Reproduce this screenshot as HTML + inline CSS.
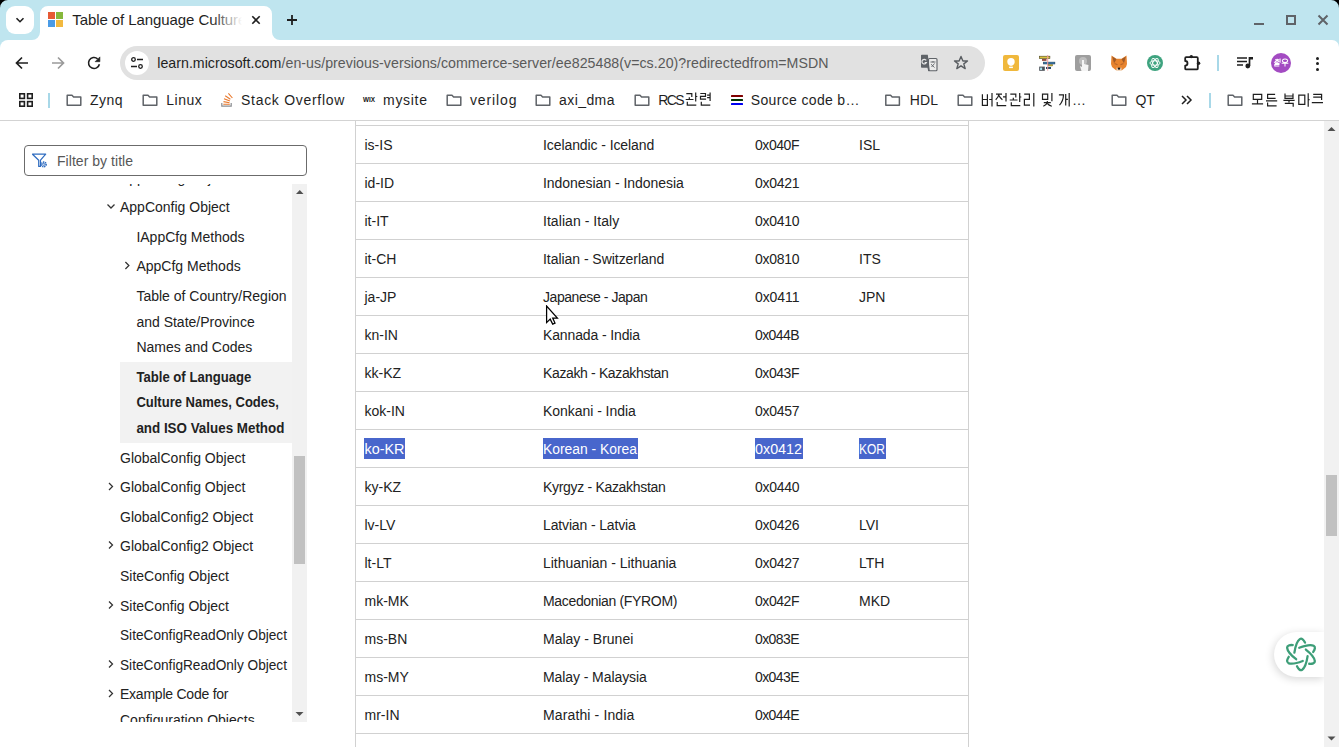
<!DOCTYPE html>
<html><head><meta charset="utf-8">
<style>
*{box-sizing:border-box;margin:0;padding:0}
html,body{width:1339px;height:747px;overflow:hidden;background:#fff;font-family:"Liberation Sans",sans-serif;color:#161616}
.a{position:absolute;white-space:nowrap}
#strip{position:absolute;left:0;top:0;width:1339px;height:50px;background:#bfe5ef}
#toolbar{position:absolute;left:0;top:40px;width:1339px;height:80px;background:#fff;border-radius:8px 7px 0 0}
#bline{position:absolute;left:0;top:120px;width:1339px;height:1px;background:#d3d3d3}
.bm{position:absolute;top:90px;font-size:14px;color:#1f1f1f;line-height:18px}
.fold{position:absolute;top:94px;width:16px;height:12px}
.row{position:absolute;left:356px;width:612px;height:1px;background:#d1d1d1}
.cell{position:absolute;font-size:14px;line-height:18px;color:#161616}
.ti{position:absolute;font-size:14px;line-height:18px;color:#161616}
.chev{position:absolute}
</style></head><body>
<div id="strip"></div>
<!-- window corners -->
<svg class="a" style="left:0;top:0" width="8" height="8"><path d="M0 0H8A8 8 0 0 0 0 8Z" fill="#000"/></svg>
<svg class="a" style="left:1331px;top:0" width="8" height="8"><path d="M0 0H8V8A8 8 0 0 0 0 0Z" fill="#000"/></svg>
<!-- tab search dropdown -->
<div class="a" style="left:6px;top:6px;width:28px;height:28px;background:#fff;border-radius:9px"></div>
<svg class="a" style="left:14px;top:14px" width="12" height="12"><path d="M2.5 4.2L6 7.7L9.5 4.2" fill="none" stroke="#1f1f1f" stroke-width="1.6"/></svg>
<!-- active tab -->
<svg class="a" style="left:30px;top:6px" width="252" height="34"><path d="M2 34A8 8 0 0 0 10 26V8A8 8 0 0 1 18 0H234A8 8 0 0 1 242 8V26A8 8 0 0 0 250 34Z" fill="#fff"/></svg>
<svg class="a" style="left:48px;top:12px" width="16" height="16"><rect x="0" y="0" width="7" height="7" fill="#e65a35"/><rect x="8" y="0" width="7" height="7" fill="#86b83b"/><rect x="0" y="8" width="7" height="7" fill="#4a9be6"/><rect x="8" y="8" width="7" height="7" fill="#f2b93f"/></svg>
<svg class="a" style="left:66px;top:6px" width="182" height="30"><defs><linearGradient id="fade" x1="0" x2="1"><stop offset="0" stop-color="#fff" stop-opacity="0"/><stop offset="1" stop-color="#fff" stop-opacity="1"/></linearGradient></defs><text x="6.3" y="19" font-family="Liberation Sans" font-size="15" fill="#1f1f1f" textLength="174">Table of Language Culture</text><rect x="146" y="0" width="30" height="30" fill="url(#fade)"/><rect x="176" y="0" width="6" height="30" fill="#fff"/></svg>
<svg class="a" style="left:250px;top:14px" width="12" height="12"><path d="M2.3 2.3L9.7 9.7M9.7 2.3L2.3 9.7" stroke="#1f1f1f" stroke-width="1.6"/></svg>
<svg class="a" style="left:285px;top:13px" width="14" height="14"><path d="M7 2V12M2 7H12" stroke="#1f1f1f" stroke-width="1.8"/></svg>
<!-- window controls -->
<div class="a" style="left:1254px;top:23px;width:10px;height:2px;background:#5f6368"></div>
<div class="a" style="left:1286px;top:15px;width:10px;height:10px;border:2px solid #5f6368"></div>
<svg class="a" style="left:1317px;top:14px" width="12" height="12"><path d="M1.5 1.5L10.5 10.5M10.5 1.5L1.5 10.5" stroke="#5f6368" stroke-width="2"/></svg>

<div id="toolbar"></div>
<!-- nav buttons -->
<svg class="a" style="left:14px;top:55px" width="16" height="16"><path d="M14 8H3M8 2.5L2.5 8L8 13.5" fill="none" stroke="#1f1f1f" stroke-width="1.7"/></svg>
<svg class="a" style="left:50px;top:55px" width="16" height="16"><path d="M2 8H13M8 2.5L13.5 8L8 13.5" fill="none" stroke="#9a9a9a" stroke-width="1.7"/></svg>
<svg class="a" style="left:86px;top:55px" width="16" height="16"><path d="M13.4 9.2A5.5 5.5 0 1 1 11.6 3.8" fill="none" stroke="#1f1f1f" stroke-width="1.6"/><path d="M13.9 1.9V6.7H9.1Z" fill="#1f1f1f" stroke="#1f1f1f" stroke-width="0.6" stroke-linejoin="round"/></svg>
<!-- omnibox -->
<div class="a" style="left:120px;top:46px;width:865px;height:34px;border-radius:17px;background:#e1e1e1"></div>
<div class="a" style="left:125px;top:51px;width:24px;height:24px;border-radius:12px;background:#fff"></div>
<svg class="a" style="left:129px;top:55px" width="16" height="16"><circle cx="4.5" cy="4.5" r="1.8" fill="none" stroke="#1f1f1f" stroke-width="1.3"/><path d="M8 4.5H14M2 11.5H8" stroke="#1f1f1f" stroke-width="1.3"/><circle cx="11.5" cy="11.5" r="1.8" fill="none" stroke="#1f1f1f" stroke-width="1.3"/></svg>
<svg class="a" style="left:150px;top:50px" width="690" height="26" font-family="Liberation Sans" font-size="14.2"><text x="7.3" y="18" fill="#1f1f1f" textLength="124">learn.microsoft.com</text><text x="131.5" y="18" fill="#5a5a5a" textLength="547">/en-us/previous-versions/commerce-server/ee825488(v=cs.20)?redirectedfrom=MSDN</text></svg>
<!-- translate icon -->
<svg class="a" style="left:920px;top:54px" width="18" height="18"><rect x="8.5" y="4.5" width="8.5" height="12.3" rx="1" fill="#ebebeb" stroke="#5f6368" stroke-width="1.1"/><path d="M1.8 0.8H7.8L9.8 16.8L8.3 17.2L7.5 13.8H1.8Q1 13.8 1 13V1.6Q1 0.8 1.8 0.8Z" fill="#5f6368"/><path d="M6.2 6.4A2.3 2.3 0 1 0 6.4 8.6H4.6" fill="none" stroke="#e6e6e6" stroke-width="1.2"/><path d="M10.5 8H15.5M13 7V8.5M11 10.2L14.5 13.5M14.5 9.5L11.5 13" stroke="#5f6368" stroke-width="0.9"/></svg>
<svg class="a" style="left:953px;top:55px" width="16" height="16"><path d="M8 1.5L9.9 6H14.5L10.8 8.9L12.2 13.6L8 10.8L3.8 13.6L5.2 8.9L1.5 6H6.1Z" fill="none" stroke="#5a5e62" stroke-width="1.4" stroke-linejoin="round"/></svg>
<!-- extensions -->
<div class="a" style="left:1003px;top:55px;width:16px;height:16px;border-radius:2px;background:#f0b83c"></div>
<svg class="a" style="left:1003px;top:55px" width="16" height="16"><circle cx="8" cy="6.8" r="3.7" fill="#fff"/><rect x="6.6" y="9" width="2.8" height="1.6" fill="#fff"/><rect x="6.1" y="11.6" width="3.8" height="1.5" fill="#fff"/></svg>
<svg class="a" style="left:1039px;top:55px" width="17" height="17"><rect x="0.3" y="1.2" width="10.6" height="2.4" fill="#dcc43c" stroke="#4a4424" stroke-width="0.6"/><rect x="3" y="4.1" width="4.5" height="1.7" fill="#8c3a30"/><rect x="4.3" y="7.1" width="11.6" height="1.9" fill="#3c7ab0" stroke="#1a3a50" stroke-width="0.5"/><rect x="9.5" y="9.6" width="4.2" height="1.4" fill="#d0bc30" stroke="#4a4424" stroke-width="0.4"/><rect x="0.2" y="11.6" width="5.6" height="4.2" fill="#4a5058"/><rect x="1.1" y="12.6" width="2" height="2.4" fill="#a8e0f0"/><rect x="7" y="12.1" width="5" height="1.8" fill="#10385a"/><rect x="8.2" y="0" width="1" height="15.6" fill="#f2a0a0"/></svg>
<div class="a" style="left:1075px;top:55px;width:16px;height:16px;border-radius:2px;background:#9e9e9e"></div>
<svg class="a" style="left:1075px;top:55px" width="16" height="16"><circle cx="8" cy="6" r="4" fill="#bdbdbd"/><path d="M7 5V12L5 11L6.5 16H13L13.5 10L9 9V5Z" fill="#f5f5f5"/></svg>
<svg class="a" style="left:1111px;top:55px" width="17" height="16"><path d="M0.5 0.5L5.5 3.8H10.5L15.5 0.5L16 9L15 12L11 15.2H5L1 12L0 9Z" fill="#e8842e"/><path d="M1.2 1.5L5.5 4.2L3 8.2Z" fill="#9f5a28"/><path d="M14.8 1.5L10.5 4.2L13 8.2Z" fill="#9f5a28"/><path d="M3.5 8.5L6.5 9.8M12.5 8.5L9.5 9.8" stroke="#b8662a" stroke-width="1.2"/><path d="M5.5 12.5L8 13.5L10.5 12.5L10.5 15.5H5.5Z" fill="#ecd2b8"/><circle cx="8" cy="13.6" r="1.2" fill="#1e1e1e"/></svg>
<div class="a" style="left:1147px;top:55px;width:16px;height:16px;border-radius:8px;background:#3ea37f"></div>
<svg class="a" style="left:1147px;top:55px" width="16" height="16"><g fill="none" stroke="#fff" stroke-width="0.9"><ellipse cx="8" cy="8" rx="5" ry="2.2"/><ellipse cx="8" cy="8" rx="5" ry="2.2" transform="rotate(60 8 8)"/><ellipse cx="8" cy="8" rx="5" ry="2.2" transform="rotate(120 8 8)"/></g></svg>
<svg class="a" style="left:1184px;top:54px" width="17" height="17"><path d="M2.2 3.2H12.8Q13.8 3.2 13.8 4.2V14.4Q13.8 15.4 12.8 15.4H2.2Q1.2 15.4 1.2 14.4V11.6A2.3 2.3 0 0 0 1.2 7V4.2Q1.2 3.2 2.2 3.2Z" fill="none" stroke="#1f1f1f" stroke-width="1.8" stroke-linejoin="round"/><circle cx="7.3" cy="2.6" r="1.7" fill="#1f1f1f"/><circle cx="14.6" cy="9.2" r="1.7" fill="#1f1f1f"/></svg>
<div class="a" style="left:1217px;top:55px;width:2px;height:16px;background:#a8d8e8"></div>
<svg class="a" style="left:1237px;top:56px" width="17" height="13"><path d="M0 2H10M0 5.5H10M0 9H6" stroke="#1f1f1f" stroke-width="1.7"/><path d="M12.5 1V10" stroke="#1f1f1f" stroke-width="1.7"/><path d="M12.5 1H16V3.5H12.5" fill="#1f1f1f"/><circle cx="10.8" cy="10" r="2.4" fill="#1f1f1f"/></svg>
<div class="a" style="left:1271px;top:53px;width:20px;height:20px;border-radius:10px;background:#a34bc2"></div>
<svg class="a" style="left:1271px;top:53px" width="20" height="20"><path transform="translate(2.6,5.6) scale(0.6)" d="M6 0.4V1.4M2.5 1.8H9.5M6 2Q5 4 2.5 5M6 2.6Q7 4 9.5 5M0.5 6.2H8M10.8 0V7M2 8H9V10H2V12.5H9.5" fill="none" stroke="#fff" stroke-width="1.67"/><path transform="translate(10.4,5.6) scale(0.6)" d="M6 0.8A4.5 2.8 0 1 0 6.01 0.8ZM0.4 7.6H11.6M6 7.6V13" fill="none" stroke="#fff" stroke-width="1.67"/></svg>
<div class="a" style="left:1315.5px;top:56.5px;width:3.4px;height:3.4px;border-radius:2px;background:#1f1f1f"></div>
<div class="a" style="left:1315.5px;top:61.5px;width:3.4px;height:3.4px;border-radius:2px;background:#1f1f1f"></div>
<div class="a" style="left:1315.5px;top:67.5px;width:3.4px;height:3.4px;border-radius:2px;background:#1f1f1f"></div>

<!-- bookmarks bar -->
<svg class="a" style="left:19px;top:93px" width="14" height="14"><g fill="none" stroke="#1f1f1f" stroke-width="1.6"><rect x="0.8" y="0.8" width="4.6" height="4.6"/><rect x="8.6" y="0.8" width="4.6" height="4.6"/><rect x="0.8" y="8.6" width="4.6" height="4.6"/><rect x="8.6" y="8.6" width="4.6" height="4.6"/></g></svg>
<div class="a" style="left:48px;top:93px;width:2px;height:15px;background:#a8d8e8"></div>
<svg class="a" style="left:0;top:0" width="1339" height="121">
<path transform="translate(66,94)" d="M1.2 1.2H6L7.6 2.9H14.8V11.3H1.2Z" fill="none" stroke="#5f6368" stroke-width="1.5" stroke-linejoin="round"/>
<text x="90" y="105" font-family="Liberation Sans" font-size="14" fill="#1f1f1f" textLength="32.5" lengthAdjust="spacing">Zynq</text>
<path transform="translate(142,94)" d="M1.2 1.2H6L7.6 2.9H14.8V11.3H1.2Z" fill="none" stroke="#5f6368" stroke-width="1.5" stroke-linejoin="round"/>
<text x="166.3" y="105" font-family="Liberation Sans" font-size="14" fill="#1f1f1f" textLength="35.4" lengthAdjust="spacing">Linux</text>
<g transform="translate(221,93)"><path d="M0.8 10V13.2H10.2V10" fill="none" stroke="#8a8d91" stroke-width="1.2"/><path d="M2.3 11.3H8.8M2.5 8.6L8.5 9.7M3 5.7L8.9 7.9M4.2 2.8L9.4 6.2M7.4 0.3L11.4 5" stroke="#e9782c" stroke-width="1.1"/></g>
<text x="241" y="105" font-family="Liberation Sans" font-size="14" fill="#1f1f1f" textLength="103.4" lengthAdjust="spacing">Stack Overflow</text>
<text x="363" y="102.3" font-family="Liberation Sans" font-size="7" font-weight="bold" fill="#111" textLength="12" lengthAdjust="spacingAndGlyphs">WIX</text>
<text x="383" y="105" font-family="Liberation Sans" font-size="14" fill="#1f1f1f" textLength="44" lengthAdjust="spacing">mysite</text>
<path transform="translate(446,94)" d="M1.2 1.2H6L7.6 2.9H14.8V11.3H1.2Z" fill="none" stroke="#5f6368" stroke-width="1.5" stroke-linejoin="round"/>
<text x="470" y="105" font-family="Liberation Sans" font-size="14" fill="#1f1f1f" textLength="46.5" lengthAdjust="spacing">verilog</text>
<path transform="translate(535,94)" d="M1.2 1.2H6L7.6 2.9H14.8V11.3H1.2Z" fill="none" stroke="#5f6368" stroke-width="1.5" stroke-linejoin="round"/>
<text x="559" y="105" font-family="Liberation Sans" font-size="14" fill="#1f1f1f" textLength="55.5" lengthAdjust="spacing">axi_dma</text>
<path transform="translate(634,94)" d="M1.2 1.2H6L7.6 2.9H14.8V11.3H1.2Z" fill="none" stroke="#5f6368" stroke-width="1.5" stroke-linejoin="round"/>
<text x="658.3" y="105" font-family="Liberation Sans" font-size="14" fill="#1f1f1f" textLength="26.3" lengthAdjust="spacing">RCS</text><path transform="translate(685.3,92.5) scale(1.0)" d="M1 1.2H6.5V4.5M4 4.8V6.8M0.4 7H8.2M10.4 0V9M10.4 4H12M2 9.3V12.6H11" fill="none" stroke="#1f1f1f" stroke-width="1.20"/><path transform="translate(699.3,92.5) scale(1.0)" d="M1 1H6.2V3.8H1.2V6.6H6.8M7.8 2.6H10.8M7.8 5.2H10.8M10.8 0V8.4M2 9.2V12.6H11" fill="none" stroke="#1f1f1f" stroke-width="1.20"/>
<g><rect x="731" y="95" width="12" height="2" rx="0.5" fill="#800000"/><rect x="731" y="99" width="12" height="2" rx="0.5" fill="#003300"/><rect x="731" y="103" width="12" height="2" rx="0.5" fill="#0000f0"/></g>
<text x="750.8" y="105" font-family="Liberation Sans" font-size="14" fill="#1f1f1f" textLength="108.7" lengthAdjust="spacing">Source code b…</text>
<path transform="translate(884.6,94)" d="M1.2 1.2H6L7.6 2.9H14.8V11.3H1.2Z" fill="none" stroke="#5f6368" stroke-width="1.5" stroke-linejoin="round"/>
<text x="909.7" y="105" font-family="Liberation Sans" font-size="14" fill="#1f1f1f" textLength="28.3" lengthAdjust="spacing">HDL</text>
<path transform="translate(957,94)" d="M1.2 1.2H6L7.6 2.9H14.8V11.3H1.2Z" fill="none" stroke="#5f6368" stroke-width="1.5" stroke-linejoin="round"/>
<path transform="translate(981.2,93) scale(1.0)" d="M1.2 1.2V12.3H6.2V1.2M1.2 6.5H6.2M8 6.5H10.8M10.8 0V13.5" fill="none" stroke="#1f1f1f" stroke-width="1.20"/><path transform="translate(995.2,93) scale(1.0)" d="M0.8 1.2H6.8M3.8 1.2Q3.2 4.5 0.5 6.8M3.8 2.5Q4.8 5 7.2 6.8M7.8 3.8H10.8M10.8 0V8.5M2 9V12.6H11" fill="none" stroke="#1f1f1f" stroke-width="1.20"/><path transform="translate(1009.3,93) scale(1.0)" d="M1 1.2H6.5V4.5M4 4.8V6.8M0.4 7H8.2M10.4 0V9M10.4 4H12M2 9.3V12.6H11" fill="none" stroke="#1f1f1f" stroke-width="1.20"/><path transform="translate(1023.2,93) scale(1.0)" d="M1 1.2H6.2V6.4H1.2V12.2H6.8M10.6 0V13.5" fill="none" stroke="#1f1f1f" stroke-width="1.20"/><path transform="translate(1041.3,93) scale(1.0)" d="M1.2 1.2H6.4V6.4H1.2ZM10.6 0V8.2M6 8V9.2M2.5 9.6H9.5M6 9.8Q5 12 2 13.2M6.2 10.6Q7.5 12.3 10.5 13.2" fill="none" stroke="#1f1f1f" stroke-width="1.20"/><path transform="translate(1058.3,93) scale(1.0)" d="M0.6 1.8H5.2Q5 8 1.2 12.2M7.4 1V12.5M7.4 6.3H9.6M10.9 0V13.5" fill="none" stroke="#1f1f1f" stroke-width="1.20"/><text x="1072" y="105" font-family="Liberation Sans" font-size="14" fill="#1f1f1f">…</text>
<path transform="translate(1111,94)" d="M1.2 1.2H6L7.6 2.9H14.8V11.3H1.2Z" fill="none" stroke="#5f6368" stroke-width="1.5" stroke-linejoin="round"/>
<text x="1135.6" y="105" font-family="Liberation Sans" font-size="14" fill="#1f1f1f" textLength="19.2" lengthAdjust="spacing">QT</text>
<path transform="translate(1227,94)" d="M1.2 1.2H6L7.6 2.9H14.8V11.3H1.2Z" fill="none" stroke="#5f6368" stroke-width="1.5" stroke-linejoin="round"/>
<path transform="translate(1251.5,93.2) scale(1.0)" d="M1.8 1.2H10.2V6.2H1.8ZM6 6.2V10.3M0.4 10.6H11.6" fill="none" stroke="#1f1f1f" stroke-width="1.20"/><path transform="translate(1265.6,93.2) scale(1.0)" d="M9.5 1.2H2V5.2H10M0.4 7.6H11.6M2 9.4V12.6H11" fill="none" stroke="#1f1f1f" stroke-width="1.20"/><path transform="translate(1283,93.2) scale(1.0)" d="M2 0.4V5.2H10V0.4M2 2.8H10M0.4 7.2H11.6M6 7.2V9.2M1.8 10.2H10.2V13.5" fill="none" stroke="#1f1f1f" stroke-width="1.20"/><path transform="translate(1297.6,93.2) scale(1.0)" d="M1.2 2H7.2V11.2H1.2ZM10.6 0V13.5M10.6 6.5H12" fill="none" stroke="#1f1f1f" stroke-width="1.20"/><path transform="translate(1311.4,93.2) scale(1.0)" d="M1.8 1.2H10.2V6.8M1.8 4H10.2M0.4 9.4H11.6" fill="none" stroke="#1f1f1f" stroke-width="1.20"/>
<path d="M1182 96L1186 100L1182 104M1187 96L1191 100L1187 104" fill="none" stroke="#1f1f1f" stroke-width="1.5"/>
<rect x="1209" y="93" width="2" height="15" fill="#a8d8e8"/>
</svg>

<div id="bline"></div>
<!-- sidebar -->
<div class="a" style="left:24px;top:145px;width:283px;height:31px;border:1px solid #6b6b6b;border-radius:4px;background:#fff"></div>
<svg class="a" style="left:32px;top:153px" width="16" height="15"><path d="M1 1.2H14.2L9 7.2V13.4L7.2 13.4V7.2Z" fill="none" stroke="#2f6cc0" stroke-width="1.2" stroke-linejoin="round" transform="translate(-0.5,0)"/><circle cx="11.8" cy="11.4" r="2.6" fill="#fff"/><circle cx="11.8" cy="11.4" r="2.3" fill="none" stroke="#2f6cc0" stroke-width="1.6" stroke-dasharray="1.2 0.6"/><circle cx="11.8" cy="11.4" r="1" fill="none" stroke="#2f6cc0" stroke-width="0.8"/></svg>
<svg class="a" style="left:0;top:0" width="310" height="747">
<text x="57" y="166" textLength="76" font-family="Liberation Sans" font-size="14" fill="#575757">Filter by title</text>
<defs><clipPath id="tc"><rect x="0" y="184" width="292" height="538"/></clipPath></defs>
<g clip-path="url(#tc)" font-family="Liberation Sans" font-size="14" fill="#222">
<rect x="120" y="362" width="172" height="81" fill="#f2f2f2"/>

<text x="120" y="182.5" textLength="109.73">AppConfig Object</text>
<text x="120" y="212.0" textLength="109.73">AppConfig Object</text>
<path d="M107.5 204.5L111 208L114.5 204.5" fill="none" stroke="#333" stroke-width="1.25"/>
<text x="136.4" y="242.0" textLength="108.17">IAppCfg Methods</text>
<text x="136.4" y="271.0" textLength="104.30">AppCfg Methods</text>
<path d="M125.4 262L128.9 265.5L125.4 269" fill="none" stroke="#333" stroke-width="1.25"/>
<text x="136.4" y="301.0" textLength="150.20">Table of Country/Region</text>
<text x="136.4" y="326.5" textLength="118.30">and State/Province</text>
<text x="136.4" y="352" textLength="115.95">Names and Codes</text>
<text x="136.4" y="381.5" font-weight="bold" textLength="115" lengthAdjust="spacingAndGlyphs">Table of Language</text>
<text x="136.4" y="407" font-weight="bold" textLength="142.5" lengthAdjust="spacingAndGlyphs">Culture Names, Codes,</text>
<text x="136.4" y="432.5" font-weight="bold" textLength="148" lengthAdjust="spacingAndGlyphs">and ISO Values Method</text>
<text x="120" y="463.0" textLength="125.30">GlobalConfig Object</text>
<text x="120" y="492.0" textLength="125.30">GlobalConfig Object</text>
<path d="M109 483L112.5 486.5L109 490" fill="none" stroke="#333" stroke-width="1.25"/>
<text x="120" y="521.5" textLength="133.08">GlobalConfig2 Object</text>
<text x="120" y="550.5" textLength="133.08">GlobalConfig2 Object</text>
<path d="M109 541.5L112.5 545.0L109 548.5" fill="none" stroke="#333" stroke-width="1.25"/>
<text x="120" y="580.5" textLength="108.95">SiteConfig Object</text>
<text x="120" y="610.5" textLength="108.95">SiteConfig Object</text>
<path d="M109 601.5L112.5 605.0L109 608.5" fill="none" stroke="#333" stroke-width="1.25"/>
<text x="120" y="640.0" textLength="167" lengthAdjust="spacingAndGlyphs">SiteConfigReadOnly Object</text>
<text x="120" y="669.5" textLength="167" lengthAdjust="spacingAndGlyphs">SiteConfigReadOnly Object</text>
<path d="M109 660.5L112.5 664.0L109 667.5" fill="none" stroke="#333" stroke-width="1.25"/>
<text x="120" y="699.0" textLength="108.5">Example Code for</text>
<text x="120" y="724.5" textLength="134.64">Configuration Objects</text>
<path d="M109 690L112.5 693.5L109 697" fill="none" stroke="#333" stroke-width="1.25"/>
</g>
<rect x="292" y="184" width="15" height="538" fill="#f1f1f1"/>
<rect x="294" y="456" width="11" height="108" fill="#c1c1c1"/>
<path d="M296 194H303.5L299.75 190Z" fill="#505050"/>
<path d="M295.5 712H303.5L299.5 716Z" fill="#505050"/>
</svg>
<svg class="a" style="left:0;top:0" width="1339" height="747">
<rect x="355" y="121" width="1" height="626" fill="#d1d1d1"/><rect x="968" y="121" width="1" height="626" fill="#d1d1d1"/>
<rect x="356" y="125" width="612" height="1" fill="#d1d1d1"/>
<rect x="356" y="163" width="612" height="1" fill="#d1d1d1"/>
<rect x="356" y="201" width="612" height="1" fill="#d1d1d1"/>
<rect x="356" y="239" width="612" height="1" fill="#d1d1d1"/>
<rect x="356" y="277" width="612" height="1" fill="#d1d1d1"/>
<rect x="356" y="315" width="612" height="1" fill="#d1d1d1"/>
<rect x="356" y="353" width="612" height="1" fill="#d1d1d1"/>
<rect x="356" y="391" width="612" height="1" fill="#d1d1d1"/>
<rect x="356" y="429" width="612" height="1" fill="#d1d1d1"/>
<rect x="356" y="467" width="612" height="1" fill="#d1d1d1"/>
<rect x="356" y="505" width="612" height="1" fill="#d1d1d1"/>
<rect x="356" y="543" width="612" height="1" fill="#d1d1d1"/>
<rect x="356" y="581" width="612" height="1" fill="#d1d1d1"/>
<rect x="356" y="619" width="612" height="1" fill="#d1d1d1"/>
<rect x="356" y="657" width="612" height="1" fill="#d1d1d1"/>
<rect x="356" y="695" width="612" height="1" fill="#d1d1d1"/>
<rect x="356" y="733" width="612" height="1" fill="#d1d1d1"/>
<rect x="364" y="438" width="41" height="21" fill="#4866cc"/>
<rect x="543" y="438" width="95" height="21" fill="#4866cc"/>
<rect x="755" y="438" width="48" height="21" fill="#4866cc"/>
<rect x="859" y="438" width="27" height="21" fill="#4866cc"/>
<g font-family="Liberation Sans" font-size="14" fill="#222">
<text x="364.5" y="150" textLength="28.00">is-IS</text>
<text x="543" y="150" textLength="111.3">Icelandic - Iceland</text>
<text x="755" y="150" textLength="44.5">0x040F</text>
<text x="859" y="150" textLength="21.02">ISL</text>
<text x="364.5" y="188" textLength="29.56">id-ID</text>
<text x="543" y="188" textLength="140.8">Indonesian - Indonesia</text>
<text x="755" y="188" textLength="44.5">0x0421</text>
<text x="364.5" y="226" textLength="24.11">it-IT</text>
<text x="543" y="226" textLength="76.2">Italian - Italy</text>
<text x="755" y="226" textLength="44.5">0x0410</text>
<text x="364.5" y="264" textLength="31.89">it-CH</text>
<text x="543" y="264" textLength="121.3">Italian - Switzerland</text>
<text x="755" y="264" textLength="44.5">0x0810</text>
<text x="859" y="264" textLength="21.78">ITS</text>
<text x="364.5" y="302" textLength="31.91">ja-JP</text>
<text x="543" y="302" textLength="104.8">Japanese - Japan</text>
<text x="755" y="302" textLength="44.5">0x0411</text>
<text x="859" y="302" textLength="26.45">JPN</text>
<text x="364.5" y="340" textLength="33.45">kn-IN</text>
<text x="543" y="340" textLength="97.1">Kannada - India</text>
<text x="755" y="340" textLength="44.5">0x044B</text>
<text x="364.5" y="378" textLength="36.56">kk-KZ</text>
<text x="543" y="378" textLength="125.8">Kazakh - Kazakhstan</text>
<text x="755" y="378" textLength="44.5">0x043F</text>
<text x="364.5" y="416" textLength="40.45">kok-IN</text>
<text x="543" y="416" textLength="92.8">Konkani - India</text>
<text x="755" y="416" textLength="44.5">0x0457</text>
<text x="364.5" y="454" fill="#fff" textLength="40" lengthAdjust="spacingAndGlyphs">ko-KR</text>
<text x="543" y="454" fill="#fff" textLength="94" lengthAdjust="spacingAndGlyphs">Korean - Korea</text>
<text x="755" y="454" fill="#fff" textLength="47" lengthAdjust="spacingAndGlyphs">0x0412</text>
<text x="859" y="454" fill="#fff" textLength="26" lengthAdjust="spacingAndGlyphs">KOR</text>
<text x="364.5" y="492" textLength="36.56">ky-KZ</text>
<text x="543" y="492" textLength="122.8">Kyrgyz - Kazakhstan</text>
<text x="755" y="492" textLength="44.5">0x0440</text>
<text x="364.5" y="530" textLength="30.86">lv-LV</text>
<text x="543" y="530" textLength="92.8">Latvian - Latvia</text>
<text x="755" y="530" textLength="44.5">0x0426</text>
<text x="859" y="530" textLength="19.98">LVI</text>
<text x="364.5" y="568" textLength="26.97">lt-LT</text>
<text x="543" y="568" textLength="133.3">Lithuanian - Lithuania</text>
<text x="755" y="568" textLength="44.5">0x0427</text>
<text x="859" y="568" textLength="25.42">LTH</text>
<text x="364.5" y="606" textLength="44.33">mk-MK</text>
<text x="543" y="606" textLength="134.4">Macedonian (FYROM)</text>
<text x="755" y="606" textLength="44.5">0x042F</text>
<text x="859" y="606" textLength="31.12">MKD</text>
<text x="364.5" y="644" textLength="42.78">ms-BN</text>
<text x="543" y="644" textLength="90.3">Malay - Brunei</text>
<text x="755" y="644" textLength="44.5">0x083E</text>
<text x="364.5" y="682" textLength="44.33">ms-MY</text>
<text x="543" y="682" textLength="103.8">Malay - Malaysia</text>
<text x="755" y="682" textLength="44.5">0x043E</text>
<text x="364.5" y="720" textLength="35.00">mr-IN</text>
<text x="543" y="720" textLength="91.3">Marathi - India</text>
<text x="755" y="720" textLength="44.5">0x044E</text>
</g>
<rect x="1324" y="121" width="15" height="626" fill="#f1f1f1"/>
<rect x="1326" y="475" width="11" height="61" fill="#c1c1c1"/>
<path d="M1327.5 131H1335.5L1331.5 127Z" fill="#505050"/>
<path d="M1327.5 736.5H1335.5L1331.5 740.5Z" fill="#505050"/>
</svg>
<div class="a" style="left:1274px;top:632px;width:50px;height:45px;border-radius:22.5px 0 0 22.5px;background:#fff;box-shadow:-1px 2px 8px rgba(0,0,0,0.16)"></div>
<div class="a" style="left:1324px;top:600px;width:15px;height:130px;background:#f1f1f1"></div>
<svg class="a" style="left:1281px;top:634px" width="40" height="41"><g transform="translate(20,20.4)" fill="none" stroke="#3d9e78" stroke-width="2.3" stroke-linecap="round"><path transform="rotate(0)" d="M-6.6 -1.8C-5.6 -8.5 -3.8 -13.5 -1.2 -15.3C0.8 -16.6 2.6 -14.6 4 -11.8"/><path transform="rotate(60)" d="M-6.6 -1.8C-5.6 -8.5 -3.8 -13.5 -1.2 -15.3C0.8 -16.6 2.6 -14.6 4 -11.8"/><path transform="rotate(120)" d="M-6.6 -1.8C-5.6 -8.5 -3.8 -13.5 -1.2 -15.3C0.8 -16.6 2.6 -14.6 4 -11.8"/><path transform="rotate(180)" d="M-6.6 -1.8C-5.6 -8.5 -3.8 -13.5 -1.2 -15.3C0.8 -16.6 2.6 -14.6 4 -11.8"/><path transform="rotate(240)" d="M-6.6 -1.8C-5.6 -8.5 -3.8 -13.5 -1.2 -15.3C0.8 -16.6 2.6 -14.6 4 -11.8"/><path transform="rotate(300)" d="M-6.6 -1.8C-5.6 -8.5 -3.8 -13.5 -1.2 -15.3C0.8 -16.6 2.6 -14.6 4 -11.8"/></g></svg>

<svg class="a" style="left:545px;top:305px" width="16" height="22"><path d="M1.6 1V17.6L5.2 14.1L7.7 19.1L10 18.1L7.7 13.1H12.4Z" fill="#fff" stroke="#000" stroke-width="1.25" stroke-linejoin="miter"/></svg>
</body></html>
